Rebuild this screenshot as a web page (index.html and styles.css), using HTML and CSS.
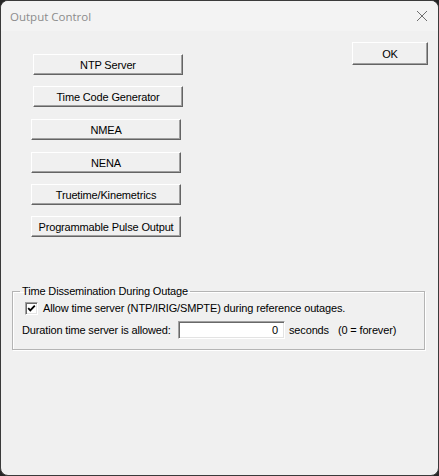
FILE: index.html
```html
<!DOCTYPE html>
<html lang="en">
<head>
    <meta charset="UTF-8">
    <title>Output Control</title>
    <link rel="stylesheet" href="styles.css">
</head>
<body>
    <div class="window">
        <div class="titlebar">
            <span class="title">Output Control</span>
            <svg class="close" width="12" height="12" viewBox="0 0 12 12">
                <path d="M1 1 L11 11 M11 1 L1 11" stroke="#6e6e6e" stroke-width="1" fill="none"/>
            </svg>
        </div>

        <div class="client">
            <div class="top">
                <div class="buttons">
                    <button class="btn wide shift">NTP Server</button>
                    <button class="btn wide shift">Time Code Generator</button>
                    <button class="btn wide extra">NMEA</button>
                    <button class="btn wide extra">NENA</button>
                    <button class="btn wide">Truetime/Kinemetrics</button>
                    <button class="btn wide">Programmable Pulse Output</button>
                </div>
                <button class="btn ok">OK</button>
            </div>

            <fieldset class="group">
                <legend>Time Dissemination During Outage</legend>
                <div class="check-row">
                    <span class="checkbox">
                        <svg width="11" height="11" viewBox="0 0 11 11">
                            <path d="M2.2 5.2 L4.3 7.4 L8.8 2.6" stroke="#000" stroke-width="1.8" fill="none"/>
                        </svg>
                    </span>
                    <span>Allow time server (NTP/IRIG/SMPTE) during reference outages.</span>
                </div>
                <div class="duration-row">
                    <span class="duration-label">Duration time server is allowed:</span>
                    <span class="field">0</span>
                    <span class="unit">seconds</span>
                    <span class="hint">(0 = forever)</span>
                </div>
            </fieldset>
        </div>
    </div>
</body>
</html>
```

FILE: styles.css
```css
* {
    margin: 0;
    padding: 0;
    box-sizing: border-box;
}

body {
    background: #262626;
    font-family: 'Liberation Sans', Arial, sans-serif;
    font-size: 11px;
    letter-spacing: -0.15px;
    color: #000;
}

.window {
    width: 439px;
    height: 476px;
    border: 1px solid #3a3a3a;
    border-radius: 8px;
    background: #f0f0f0;
    overflow: hidden;
}

.titlebar {
    height: 30px;
    background: #f3f3f3;
    display: flex;
    align-items: center;
    justify-content: space-between;
    padding: 0 10px 0 9px;
}

.title {
    font-family: 'Open Sans', 'Noto Sans', sans-serif;
    font-size: 11.5px;
    letter-spacing: 0;
    color: #8c8c8c;
    margin-top: 1px;
}

.top {
    display: flex;
    justify-content: space-between;
    align-items: flex-start;
    padding: 11px 10px 0 30px;
}

.buttons {
    display: flex;
    flex-direction: column;
    gap: 11px;
    margin-top: 12px;
}

.btn {
    font-family: 'Liberation Sans', Arial, sans-serif;
    font-size: 11px;
    letter-spacing: -0.15px;
    color: #000;
    background: #f0f0f0;
    border: 1px solid;
    border-color: #fff #646464 #646464 #fff;
    box-shadow: inset -1px -1px 0 #a0a0a0;
    text-align: center;
}

.wide {
    width: 150px;
    height: 21px;
}

.shift {
    margin-left: 2px;
}

.extra {
    margin-top: 1px;
}

.ok {
    width: 76px;
    height: 23px;
}

.group {
    margin: 48px 13px 0 11px;
    border: 1px solid #b4b4b4;
    box-shadow: 1px 1px 0 #fff, inset 1px 1px 0 #fff;
    padding: 4px 9px 10px 9px;
}

.group legend {
    padding: 0 2px;
    margin-left: -2px;
    line-height: 13px;
}

.check-row {
    display: flex;
    align-items: center;
    gap: 5px;
    margin-left: 3px;
    line-height: 13px;
}

.checkbox {
    width: 13px;
    height: 13px;
    background: #fff;
    border: 1px solid;
    border-color: #a0a0a0 #fff #fff #a0a0a0;
    box-shadow: inset 1px 1px 0 #696969, inset -1px -1px 0 #e3e3e3;
    display: flex;
    align-items: center;
    justify-content: center;
}

.duration-row {
    display: flex;
    align-items: center;
    margin-top: 6px;
    white-space: nowrap;
}

.duration-label {
    width: 156px;
}

.field {
    width: 107px;
    height: 18px;
    background: #fff;
    border: 1px solid;
    border-color: #a0a0a0 #fff #fff #a0a0a0;
    box-shadow: inset 1px 1px 0 #696969, inset -1px -1px 0 #e3e3e3;
    text-align: right;
    padding-right: 6px;
    line-height: 16px;
}

.unit {
    margin-left: 4px;
}

.hint {
    margin-left: 9px;
}
```
